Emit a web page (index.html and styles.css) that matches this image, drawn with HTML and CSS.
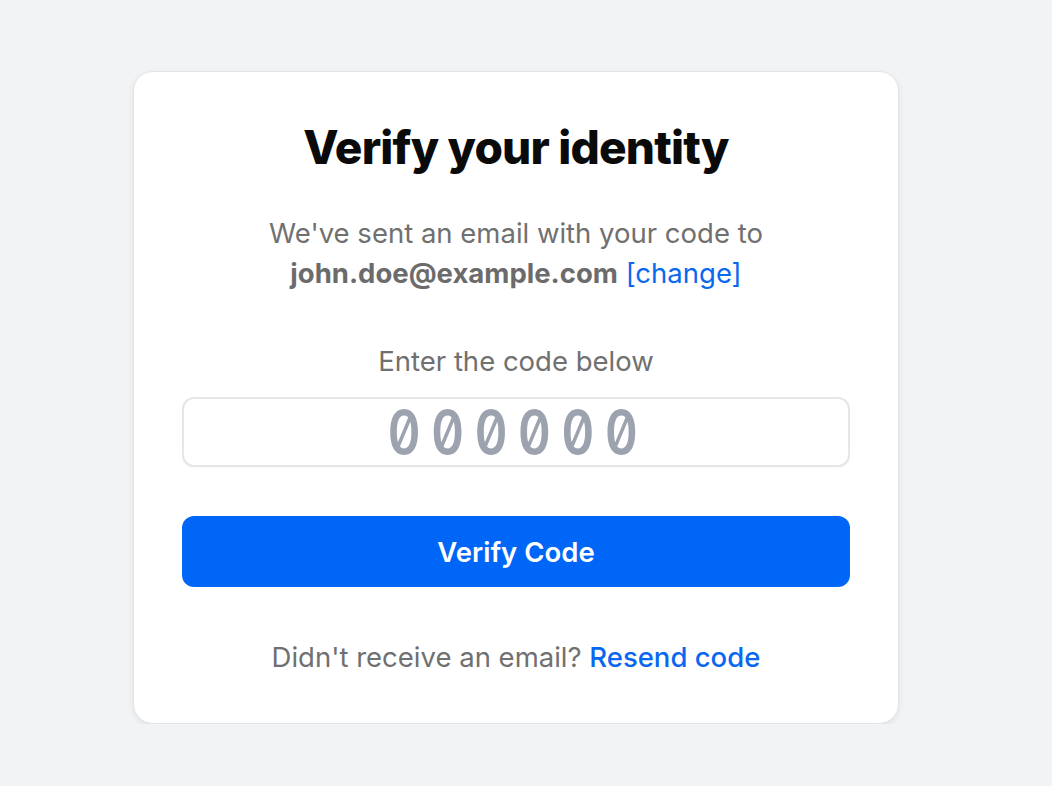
FILE: index.html
```html
<!DOCTYPE html>
<html lang="en">
<head>
<meta charset="utf-8">
<title>Verify your identity</title>
<link rel="stylesheet" href="styles.css">
</head>
<body>
<main class="page">
  <section class="card">
    <h1 class="title">Verify your identity</h1>
    <p class="lead">We've sent an email with your code to<br><strong class="email">john.doe@example.com</strong> <a class="link" href="#">[change]</a></p>
    <label class="label" for="code">Enter the code below</label>
    <div class="code-box">
      <input class="code" id="code" type="text" placeholder="000000" maxlength="6">
    </div>
    <button class="btn" type="button">Verify Code</button>
    <p class="foot">Didn't receive an email? <a class="link link-strong" href="#">Resend code</a></p>
  </section>
</main>
</body>
</html>
```
FILE: styles.css
```css
html, body {
  margin: 0;
  padding: 0;
  background: #f2f3f5;
  font-family: Inter, "Noto Sans", "Liberation Sans", sans-serif;
}
.page {
  display: flex;
  justify-content: center;
  padding: 71px 20px 0 0;
}
.card {
  width: 668px;
  padding: 48px 48px 46px;
  background: #ffffff;
  border: 1px solid #e3e4e6;
  border-radius: 20px;
  box-shadow: 0 2px 6px rgba(0, 0, 0, 0.07);
  display: flex;
  flex-direction: column;
  align-items: stretch;
  text-align: center;
}
.title {
  margin: 0;
  font-size: 46px;
  line-height: 54px;
  font-weight: 800;
  letter-spacing: -0.8px;
  color: #0a0a0a;
}
.lead {
  margin: 39px 0 0;
  font-size: 27.5px;
  line-height: 40px;
  color: #707070;
}
.email {
  font-weight: 700;
  color: #6b6b6b;
}
.link {
  color: #0a68f0;
  text-decoration: none;
}
.link-strong {
  font-weight: 500;
}
.label {
  margin-top: 48px;
  font-size: 27.5px;
  line-height: 40px;
  color: #707070;
}
.code-box {
  margin-top: 16px;
  height: 70px;
  box-sizing: border-box;
  border: 2px solid #e5e6e8;
  border-radius: 12px;
  background: #fff;
  box-shadow: 0 1px 2px rgba(0, 0, 0, 0.04);
  overflow: hidden;
}
.code {
  display: block;
  width: 781px;
  height: 66px;
  margin: 0;
  box-sizing: border-box;
  border: 0;
  background: transparent;
  text-align: center;
  font-family: Inter, "DejaVu Sans Mono", monospace;
  font-feature-settings: "tnum" 1, "zero" 1;
  font-variant-numeric: tabular-nums slashed-zero;
  font-weight: 600;
  font-size: 60px;
  letter-spacing: 12px;
  padding: 0;
  color: #374151;
  outline: none;
  transform: scaleX(0.855);
  transform-origin: 0 50%;
}
.code::placeholder {
  color: #9ca3af;
  opacity: 1;
}
.btn {
  margin-top: 49px;
  height: 71px;
  border: 0;
  border-radius: 12px;
  background: #0066f8;
  color: #ffffff;
  font-family: Inter, "Noto Sans", "Liberation Sans", sans-serif;
  font-size: 27.5px;
  font-weight: 600;
  cursor: pointer;
}
.foot {
  margin: 50px 0 0;
  font-size: 27.5px;
  line-height: 40px;
  color: #707070;
}
```
